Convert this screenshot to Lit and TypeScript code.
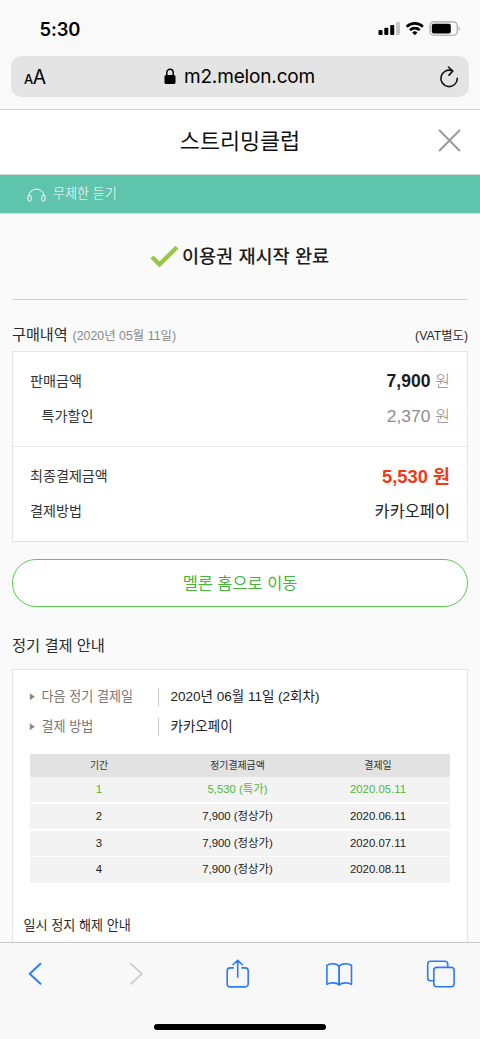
import { LitElement, html, css } from "lit";
import { customElement, property } from "lit/decorators.js";
import { classMap } from "lit/directives/class-map.js";

@customElement("safari-top")
class SafariTop extends LitElement {
  static styles = css`
    :host { display: block; height: 109px; background: #f9f9f9; border-bottom: 1px solid #d2d2d2; box-sizing: content-box; font-family: Inter, "Liberation Sans", sans-serif; color: #000; }
    .status { display: flex; align-items: center; justify-content: space-between; height: 56px; padding: 0 20px 0 39.5px; box-sizing: border-box; }
    .time { font-size: 18.4px; font-weight: 600; line-height: 24px; padding-top: 2px; letter-spacing: -0.1px; }
    .status svg { display: block; margin-top: 1px; }
    .address { display: flex; align-items: center; justify-content: space-between; height: 41px; margin: 0 11px; padding: 0 10px 0 13px; border-radius: 10px; background: #e4e4e4; box-sizing: border-box; }
    .reader { width: 24px; display: flex; align-items: baseline; font-size: 19.4px; line-height: 24px; padding-top: 3px; letter-spacing: -0.5px; }
    .small-a { font-size: 13px; font-weight: 500; }
    .site { display: flex; align-items: center; gap: 8px; font-size: 19px; line-height: 24px; letter-spacing: -0.15px; margin-left: -8px; padding-top: 1px; }
    .site svg { margin-top: -2px; }
  `;
  render() {
    return html`
      <div class="status">
        <span class="time">5:30</span>
        <svg width="82" height="16" viewBox="378 21 82 16">
          <rect x="378.5" y="30" width="4" height="5" rx="1" />
          <rect x="384.3" y="27.8" width="4" height="7.2" rx="1" />
          <rect x="390.2" y="25" width="4" height="10" rx="1" />
          <rect x="396" y="22" width="4" height="13" rx="1" fill="#c8c8c8" />
          <g fill="none" stroke="#000" stroke-width="2.6">
            <path d="M406.7 26.7a11.6 11.6 0 0 1 16.2 0" />
            <path d="M409.9 30.1a7 7 0 0 1 9.8 0" />
          </g>
          <path d="M414.8 35.2l-2.6-2.7a3.7 3.7 0 0 1 5.2 0z" />
          <rect x="430" y="21.9" width="27.2" height="13.4" rx="3.8" fill="none" stroke="#a2a2a2" stroke-width="1.1" />
          <rect x="431.8" y="23.8" width="19" height="9.8" rx="2" />
          <path d="M458.6 26.6v4.2c1.6-.7 1.6-3.5 0-4.2z" fill="#a2a2a2" />
        </svg>
      </div>
      <div class="address">
        <div class="reader"><span class="small-a">A</span><span>A</span></div>
        <div class="site">
          <svg width="12" height="17" viewBox="0 0 12 17">
            <rect x="0.5" y="7" width="11" height="9" rx="1.6" />
            <path d="M2.8 8V4.6a3.2 3.4 0 0 1 6.4 0V8" fill="none" stroke="#000" stroke-width="1.5" />
          </svg>
          <span>m2.melon.com</span>
        </div>
        <svg width="20" height="24" viewBox="439.5 64.5 20 24" fill="none" stroke="#111" stroke-width="1.6" stroke-linecap="round" stroke-linejoin="round">
          <path d="M452.5 70.2A8.2 8.2 0 1 0 457.8 77.9" />
          <path d="M448.9 66.5l4.5 4-3.9 4.1" />
        </svg>
      </div>
    `;
  }
}

@customElement("safari-toolbar")
class SafariToolbar extends LitElement {
  static styles = css`
    :host { display: flex; flex-direction: column; align-items: center; justify-content: space-between; height: 97px; border-top: 1px solid #c6c6c6; background: #f8f8f8; box-sizing: border-box; }
    svg { display: block; }
    .home { width: 172px; height: 6px; margin-bottom: 9px; border-radius: 3px; background: #000; }
  `;
  render() {
    return html`
      <svg width="480" height="62" viewBox="0 943 480 62" fill="none" stroke="#2c7af5" stroke-width="1.6" stroke-linecap="round" stroke-linejoin="round">
        <path d="M40.5 963.8l-10.8 10 10.8 10" stroke-width="1.9" />
        <path d="M131 963.8l10.8 10-10.8 10" stroke="#c9c9c9" stroke-width="1.7" />
        <path d="M233.3 967.9h-3.1a3 3 0 0 0-3 3v13a3 3 0 0 0 3 3h15a3 3 0 0 0 3-3v-13a3 3 0 0 0-3-3h-3.1M237.7 977.3V960.5M233 964.8l4.7-4.6 4.7 4.6" />
        <path d="M339.2 966.3c-2.4-3.2-9.4-3.4-12.3-.9v19c3-2.1 9.5-2.1 12.3.5 2.8-2.6 9.3-2.6 12.3-.5v-19c-2.9-2.5-9.9-2.3-12.3.9zv18.6" />
        <path d="M339.2 966.3v18.4" />
        <path d="M433.5 980.8h-3a2.8 2.8 0 0 1-2.8-2.8v-13.9a2.8 2.8 0 0 1 2.8-2.8h14.4a2.8 2.8 0 0 1 2.8 2.8v3" />
        <rect x="433.8" y="967.4" width="20.3" height="19.4" rx="3" />
      </svg>
      <div class="home"></div>
    `;
  }
}

@customElement("schedule-table")
class ScheduleTable extends LitElement {
  @property({ attribute: false }) rows: string[][] = [];
  static styles = css`
    :host { display: flex; flex-direction: column; gap: 1.6px; }
    .row { display: grid; grid-template-columns: 138px 139px 142px; text-align: center; height: 25.2px; line-height: 25.2px; font-size: 11.4px; background: #f3f3f3; color: #1c1c1c; }
    .head { height: 23px; line-height: 23px; font-size: 9.9px; background: #e2e2e2; color: #333; margin-bottom: -1.6px; }
    .current { color: #4cb944; }
  `;
  render() {
    return html`
      <div class="row head"><span>기간</span><span>정기결제금액</span><span>결제일</span></div>
      ${this.rows.map(
        (r, i) => html`<div class=${classMap({ row: true, current: i === 0 })}>
          ${r.map((c) => html`<span>${c}</span>`)}
        </div>`
      )}
    `;
  }
}

@customElement("app-root")
class AppRoot extends LitElement {
  private schedule = [
    ["1", "5,530 (특가)", "2020.05.11"],
    ["2", "7,900 (정상가)", "2020.06.11"],
    ["3", "7,900 (정상가)", "2020.07.11"],
    ["4", "7,900 (정상가)", "2020.08.11"],
  ];
  static styles = css`
    :host { display: flex; flex-direction: column; width: 480px; height: 1039px; overflow: hidden; background: #fafafa; color: #2a2a2a; font-family: "Liberation Sans", "Noto Sans CJK KR", sans-serif; font-weight: 400; white-space: nowrap; }
    safari-top, safari-toolbar { flex: none; }
    svg { display: block; flex: none; }
    .page { flex: 1; min-height: 0; overflow: hidden; }
    .title-bar { display: grid; grid-template-columns: 1fr auto 1fr; align-items: center; height: 65px; background: #fff; border-bottom: 1px solid #d4d4d4; box-sizing: border-box; font-size: 21.8px; line-height: 64px; color: #111; }
    .title { grid-column: 2; height: 64px; }
    .close { justify-self: end; margin: -4px 19px 0 0; }
    .banner { display: flex; align-items: center; gap: 7px; height: 38px; padding: 0 0 0 27px; background: #5ec4ac; border-bottom: 1px solid #dcdcdc; box-sizing: content-box; color: #fff; font-size: 13.1px; font-weight: 300; }
    .banner span { line-height: 20px; }
    .done { display: flex; justify-content: center; align-items: center; gap: 3px; height: 85px; margin: 0 12px; padding-right: 1px; border-bottom: 1px solid #cfcfcf; font-size: 18.6px; font-weight: 500; color: #1c1c1c; }
    .done span { line-height: 28px; }
    .heading { display: flex; align-items: baseline; height: 51px; padding: 0 12px; box-sizing: border-box; font-size: 15.1px; line-height: 69px; }
    .date { margin-left: 5px; font-size: 12.4px; color: #888; }
    .vat { margin-left: auto; font-size: 12.3px; }
    .card { margin: 0 12px; border: 1px solid #e4e4e4; background: #fff; box-sizing: border-box; }
    .group { padding: 12px 17px; height: 94px; box-sizing: border-box; }
    .group + .group { border-top: 1px solid #e8e8e8; height: 95px; }
    .line { display: flex; justify-content: space-between; align-items: center; height: 35px; font-size: 14.1px; line-height: 35px; color: #333; }
    .indent { padding-left: 11.5px; }
    .value { font-size: 16.4px; color: #222; }
    .muted { color: #8c8c8c; font-size: 17.4px; }
    .won { margin-left: 0.6px; font-size: 16.4px; color: #8c8c8c; font-weight: 300; }
    .num { font-size: 17.5px; font-weight: 700; color: #1c1c1c; }
    .total { font-size: 18.4px; font-weight: 700; color: #f03a17; }
    .button { display: flex; align-items: center; justify-content: center; height: 48px; margin: 17px 12px 0; border: 1px solid #5acb52; border-radius: 24px; background: #fff; box-sizing: border-box; font-size: 16.4px; line-height: 46px; color: #45b53d; }
    .subheading { height: 62px; padding: 0 12px; font-size: 15.3px; line-height: 78px; }
    .schedule { padding: 12px 16px 0; height: 400px; }
    .info { display: flex; align-items: center; height: 30px; line-height: 30px; font-size: 13.5px; color: #222; }
    .label { width: 116.5px; margin-left: 6.5px; font-size: 13.1px; color: #777; }
    .info .sep { width: 1px; height: 18px; margin-right: 11.5px; background: #ccc; }
    schedule-table { margin: 12px 0 0 1px; width: 420px; }
    .resume { margin: 28px 0 0 -5.5px; font-size: 13.1px; line-height: 29px; }
  `;
  private info(label: string, value: string) {
    return html`<div class="info">
      <svg width="6" height="8" viewBox="0 0 6 8"><path d="M.8 0.2l5 3.5-5 3.5z" fill="#888" /></svg>
      <span class="label">${label}</span><span class="sep"></span><span>${value}</span>
    </div>`;
  }
  render() {
    return html`
      <safari-top></safari-top>
      <div class="page">
        <header class="title-bar">
          <span class="title">스트리밍클럽</span>
          <svg class="close" width="23" height="23" viewBox="0 0 23 23" fill="none" stroke="#9c9c9c" stroke-width="2.1" stroke-linecap="round"><path d="M1.6 1.6l19.8 19.8M21.4 1.6L1.6 21.4" /></svg>
        </header>
        <div class="banner">
          <svg width="19" height="15" viewBox="0 0 19 15" fill="none" stroke="#fff" stroke-width="1">
            <path d="M1.6 9.5V9a8 8.2 0 0 1 15.8 0v.5" />
            <rect x="1" y="8.2" width="3.2" height="6" rx="1.6" />
            <rect x="14.8" y="8.2" width="3.2" height="6" rx="1.6" />
          </svg>
          <span>무제한 듣기</span>
        </div>
        <div class="done">
          <svg width="29" height="23" viewBox="0 0 29 23"><path d="M2 12l7.5 7.4L27 2.2" fill="none" stroke="#98c647" stroke-width="4.3" /></svg>
          <span>이용권 재시작 완료</span>
        </div>
        <div class="heading"><span>구매내역</span><span class="date">(2020년 05월 11일)</span><span class="vat">(VAT별도)</span></div>
        <section class="card">
          <div class="group">
            <div class="line"><span>판매금액</span><span><span class="num">7,900</span> <span class="won">원</span></span></div>
            <div class="line indent"><span>특가할인</span><span><span class="muted">2,370</span> <span class="won">원</span></span></div>
          </div>
          <div class="group">
            <div class="line"><span>최종결제금액</span><span class="total">5,530 원</span></div>
            <div class="line"><span>결제방법</span><span class="value">카카오페이</span></div>
          </div>
        </section>
        <div class="button">멜론 홈으로 이동</div>
        <div class="subheading">정기 결제 안내</div>
        <section class="card schedule">
          ${this.info("다음 정기 결제일", "2020년 06월 11일 (2회차)")}
          ${this.info("결제 방법", "카카오페이")}
          <schedule-table .rows=${this.schedule}></schedule-table>
          <div class="resume">일시 정지 해제 안내</div>
        </section>
      </div>
      <safari-toolbar></safari-toolbar>
    `;
  }
}
